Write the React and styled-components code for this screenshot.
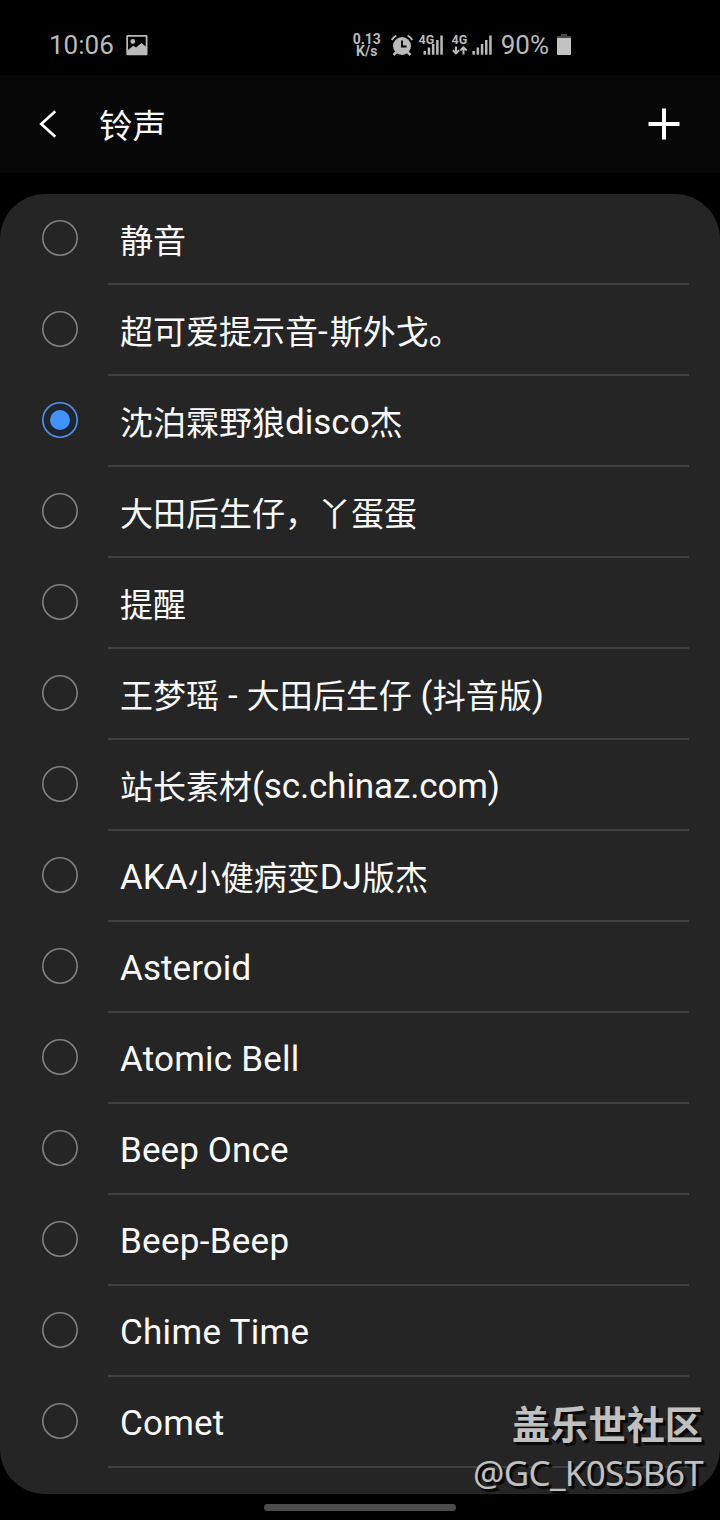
import React, { useState } from 'react';
import styled, { createGlobalStyle } from 'styled-components';

const RINGTONES = [
  { name: '静音' },
  { name: '超可爱提示音-斯外戈。', tracking: 2 },
  { name: '沈泊霖野狼disco杰' },
  { name: '大田后生仔，丫蛋蛋' },
  { name: '提醒' },
  { name: '王梦瑶 - 大田后生仔 (抖音版)', tracking: 0.2 },
  { name: '站长素材(sc.chinaz.com)', tracking: -0.13 },
  { name: 'AKA小健病变DJ版杰' },
  { name: 'Asteroid', tracking: 0.08 },
  { name: 'Atomic Bell', tracking: 0.2 },
  { name: 'Beep Once', tracking: 0.12 },
  { name: 'Beep-Beep', tracking: 0.28 },
  { name: 'Chime Time', tracking: 0.28 },
  { name: 'Comet', tracking: 0.2 },
];

const GlobalStyle = createGlobalStyle`
  body {
    margin: 0;
    background: #000;
  }
`;

const Screen = styled.div`
  position: relative;
  box-sizing: border-box;
  width: 720px;
  height: 1520px;
  display: flex;
  flex-direction: column;
  overflow: hidden;
  background: #000;
  color: #fafafa;
  font-family: Roboto, 'Noto Sans CJK SC', sans-serif;
`;

const StatusBar = styled.div`
  box-sizing: border-box;
  height: 75px;
  padding: 15px 149px 0 49px;
  display: flex;
  justify-content: space-between;
  align-items: center;
  color: #bababa;
  svg {
    display: block;
    overflow: visible;
  }
`;

const StatusGroup = styled.div`
  display: flex;
  align-items: center;
`;

const StatusText = styled.span`
  font-size: 26px;
  line-height: 30px;
  margin-right: ${({ gap }) => gap}px;
`;

const Speed = styled.div`
  width: 28px;
  margin-right: 10px;
  display: flex;
  flex-direction: column;
  align-items: center;
  font-size: 14px;
  font-weight: 700;
  line-height: 12px;
`;

const IconSlot = styled.div`
  margin-right: ${({ gap }) => gap}px;
`;

const Header = styled.header`
  box-sizing: border-box;
  height: 98px;
  padding: 0 40px 0 39px;
  display: flex;
  align-items: center;
  background: #070707;
`;

const IconButton = styled.button`
  display: flex;
  padding: 0;
  border: 0;
  background: none;
  color: #fff;
`;

const Title = styled.h1`
  flex: 1;
  margin: 0;
  padding: 5px 0 0 42px;
  font-size: 33.5px;
  font-weight: 400;
  line-height: 44px;
`;

const List = styled.ul`
  box-sizing: border-box;
  height: 1300px;
  margin: 21px 0 0;
  padding: 0 31px 0 42px;
  list-style: none;
  border-radius: 45px;
  background: #252525;
`;

const Row = styled.li`
  height: 91px;
  display: flex;
  align-items: center;
  gap: 30px;
`;

const Radio = styled.span`
  width: 36px;
  height: 36px;
  margin-bottom: 3px;
  display: flex;
  justify-content: center;
  align-items: center;
  border-radius: 50%;
  box-shadow: inset 0 0 0 1.6px ${({ checked }) => (checked ? '#5292e6' : '#808080')};
  background: ${({ checked }) => (checked ? '#1f252e' : 'none')};
  &::after {
    content: '';
    width: 20px;
    height: 20px;
    border-radius: 50%;
    background: ${({ checked }) => (checked ? '#4292fb' : 'none')};
  }
`;

const Label = styled.span`
  box-sizing: border-box;
  flex: 1;
  height: 91px;
  padding: 4px 0 0 12px;
  border-bottom: 2px solid #404040;
  font-size: 35px;
  line-height: 86px;
  letter-spacing: ${({ tracking }) => tracking}px;
  white-space: pre;
`;

const Han = styled.span`
  font-family: 'Noto Sans CJK SC', sans-serif;
  font-size: 33px;
  line-height: 1;
  letter-spacing: 0;
  vertical-align: -1px;
`;

const Handle = styled.div`
  width: 192px;
  height: 7px;
  margin: 10px auto 0;
  border-radius: 4px;
  background: #4b4b4b;
`;

const Watermark = styled.div`
  position: absolute;
  right: 17px;
  bottom: 25px;
  display: flex;
  flex-direction: column;
  align-items: flex-end;
  color: #c0c0c0;
  text-shadow: 2px 2px 1px #0a0a0a, 3px 3px 1px #0a0a0a;
`;

const Community = styled.div`
  margin-bottom: 3px;
  font: 700 38.2px/50px 'Noto Sans CJK SC', sans-serif;
`;

const UserName = styled.div`
  font: 400 35px/44px 'Noto Sans', sans-serif;
  letter-spacing: -0.7px;
`;

function PictureIcon() {
  return (
    <svg width="22" height="21" viewBox="0 0 22 21" fill="currentColor">
      <path
        fillRule="evenodd"
        d="M1.500 0h18.800a1.200 1.200 0 0 1 1.200 1.200v17.800a1.200 1.200 0 0 1-1.200 1.200H1.500a1.200 1.200 0 0 1-1.200-1.200V1.200A1.200 1.200 0 0 1 1.500 0zM2 1.800v13.200l5.300-4.300 2.800 1.900 5.300-4.600 4.300 3.600V1.800z"
      />
      <circle cx="6.800" cy="6.500" r="2.400" />
    </svg>
  );
}

function AlarmIcon() {
  return (
    <svg width="22" height="21" viewBox="0 0 22 21" fill="none" stroke="currentColor">
      <circle cx="11" cy="11" r="9" fill="currentColor" stroke="none" />
      <path d="M.8 5Q2.200 2 5.400.7M21.200 5Q19.800 2 16.600.7" strokeWidth="1.900" />
      <path d="M5.500 17l-3 3M16.500 17l3 3" strokeWidth="2.600" />
      <path d="M11 5.500V11.500H15.500" stroke="#000" strokeWidth="1.800" />
    </svg>
  );
}

function SignalIcon({ barsX, width, arrows }) {
  const tops = [16, 12.5, 9, 5, 0.5];
  return (
    <svg width={width} height="20" viewBox={`0 0 ${width} 20`} fill="currentColor">
      <text x="-0.500" y="8.700" fontSize="12.500" fontWeight="700" fontFamily="Roboto">
        4G
      </text>
      {tops.map((top, i) => (
        <rect key={top} x={barsX + i * 4.2} y={top} width="2.500" height={19.7 - top} />
      ))}
      {arrows && (
        <path
          d="M4 11.500V18.500M.8 15.200l3.200 3.200 3.200-3.200M11.500 19.500V12.500M8.300 15.500l3.200-3.200 3.200 3.200"
          fill="none"
          stroke="currentColor"
          strokeWidth="2"
        />
      )}
    </svg>
  );
}

function BatteryIcon() {
  return (
    <svg width="14" height="22" viewBox="0 0 14 22">
      <path d="M4 0h6v2h4v4H0V2h4z" fill="#484848" />
      <rect y="4" width="14" height="17" rx="0.800" fill="#c2c2c2" />
    </svg>
  );
}

function BackIcon() {
  return (
    <svg width="18" height="28" viewBox="0 0 18 28" fill="none" stroke="currentColor" strokeWidth="2.700">
      <path d="M16.300 1.200L2.300 14l14 12.800" />
    </svg>
  );
}

function PlusIcon() {
  return (
    <svg width="32" height="32" viewBox="0 0 32 32" fill="none" stroke="currentColor" strokeWidth="4">
      <path d="M16 .5v31M.5 16h31" />
    </svg>
  );
}

// Chinese glyphs are set slightly smaller than the latin ones
function renderName(name) {
  return name
    .split(/([\u3000-\u9fff\uff00-\uffef]+)/)
    .filter(Boolean)
    .map((part, i) => (/[\u3000-\uffef]/.test(part) ? <Han key={i}>{part}</Han> : part));
}

export default function App() {
  const [selected, setSelected] = useState(2);
  return (
    <Screen>
      <GlobalStyle />
      <StatusBar>
        <StatusGroup>
          <StatusText gap={12}>10:06</StatusText>
          <PictureIcon />
        </StatusGroup>
        <StatusGroup>
          <Speed>
            <span>0.13</span>
            <span>K/s</span>
          </Speed>
          <IconSlot gap={6}>
            <AlarmIcon />
          </IconSlot>
          <IconSlot gap={8}>
            <SignalIcon width={25} barsX={4.5} />
          </IconSlot>
          <IconSlot gap={9}>
            <SignalIcon width={40} barsX={20.4} arrows />
          </IconSlot>
          <StatusText gap={8}>90%</StatusText>
          <BatteryIcon />
        </StatusGroup>
      </StatusBar>
      <Header>
        <IconButton aria-label="back">
          <BackIcon />
        </IconButton>
        <Title>铃声</Title>
        <IconButton aria-label="add">
          <PlusIcon />
        </IconButton>
      </Header>
      <List>
        {RINGTONES.map(({ name, tracking = 0 }, index) => (
          <Row key={name} onClick={() => setSelected(index)}>
            <Radio checked={index === selected} />
            <Label tracking={tracking}>{renderName(name)}</Label>
          </Row>
        ))}
      </List>
      <Handle />
      <Watermark>
        <Community>盖乐世社区</Community>
        <UserName>@GC_K0S5B6T</UserName>
      </Watermark>
    </Screen>
  );
}
